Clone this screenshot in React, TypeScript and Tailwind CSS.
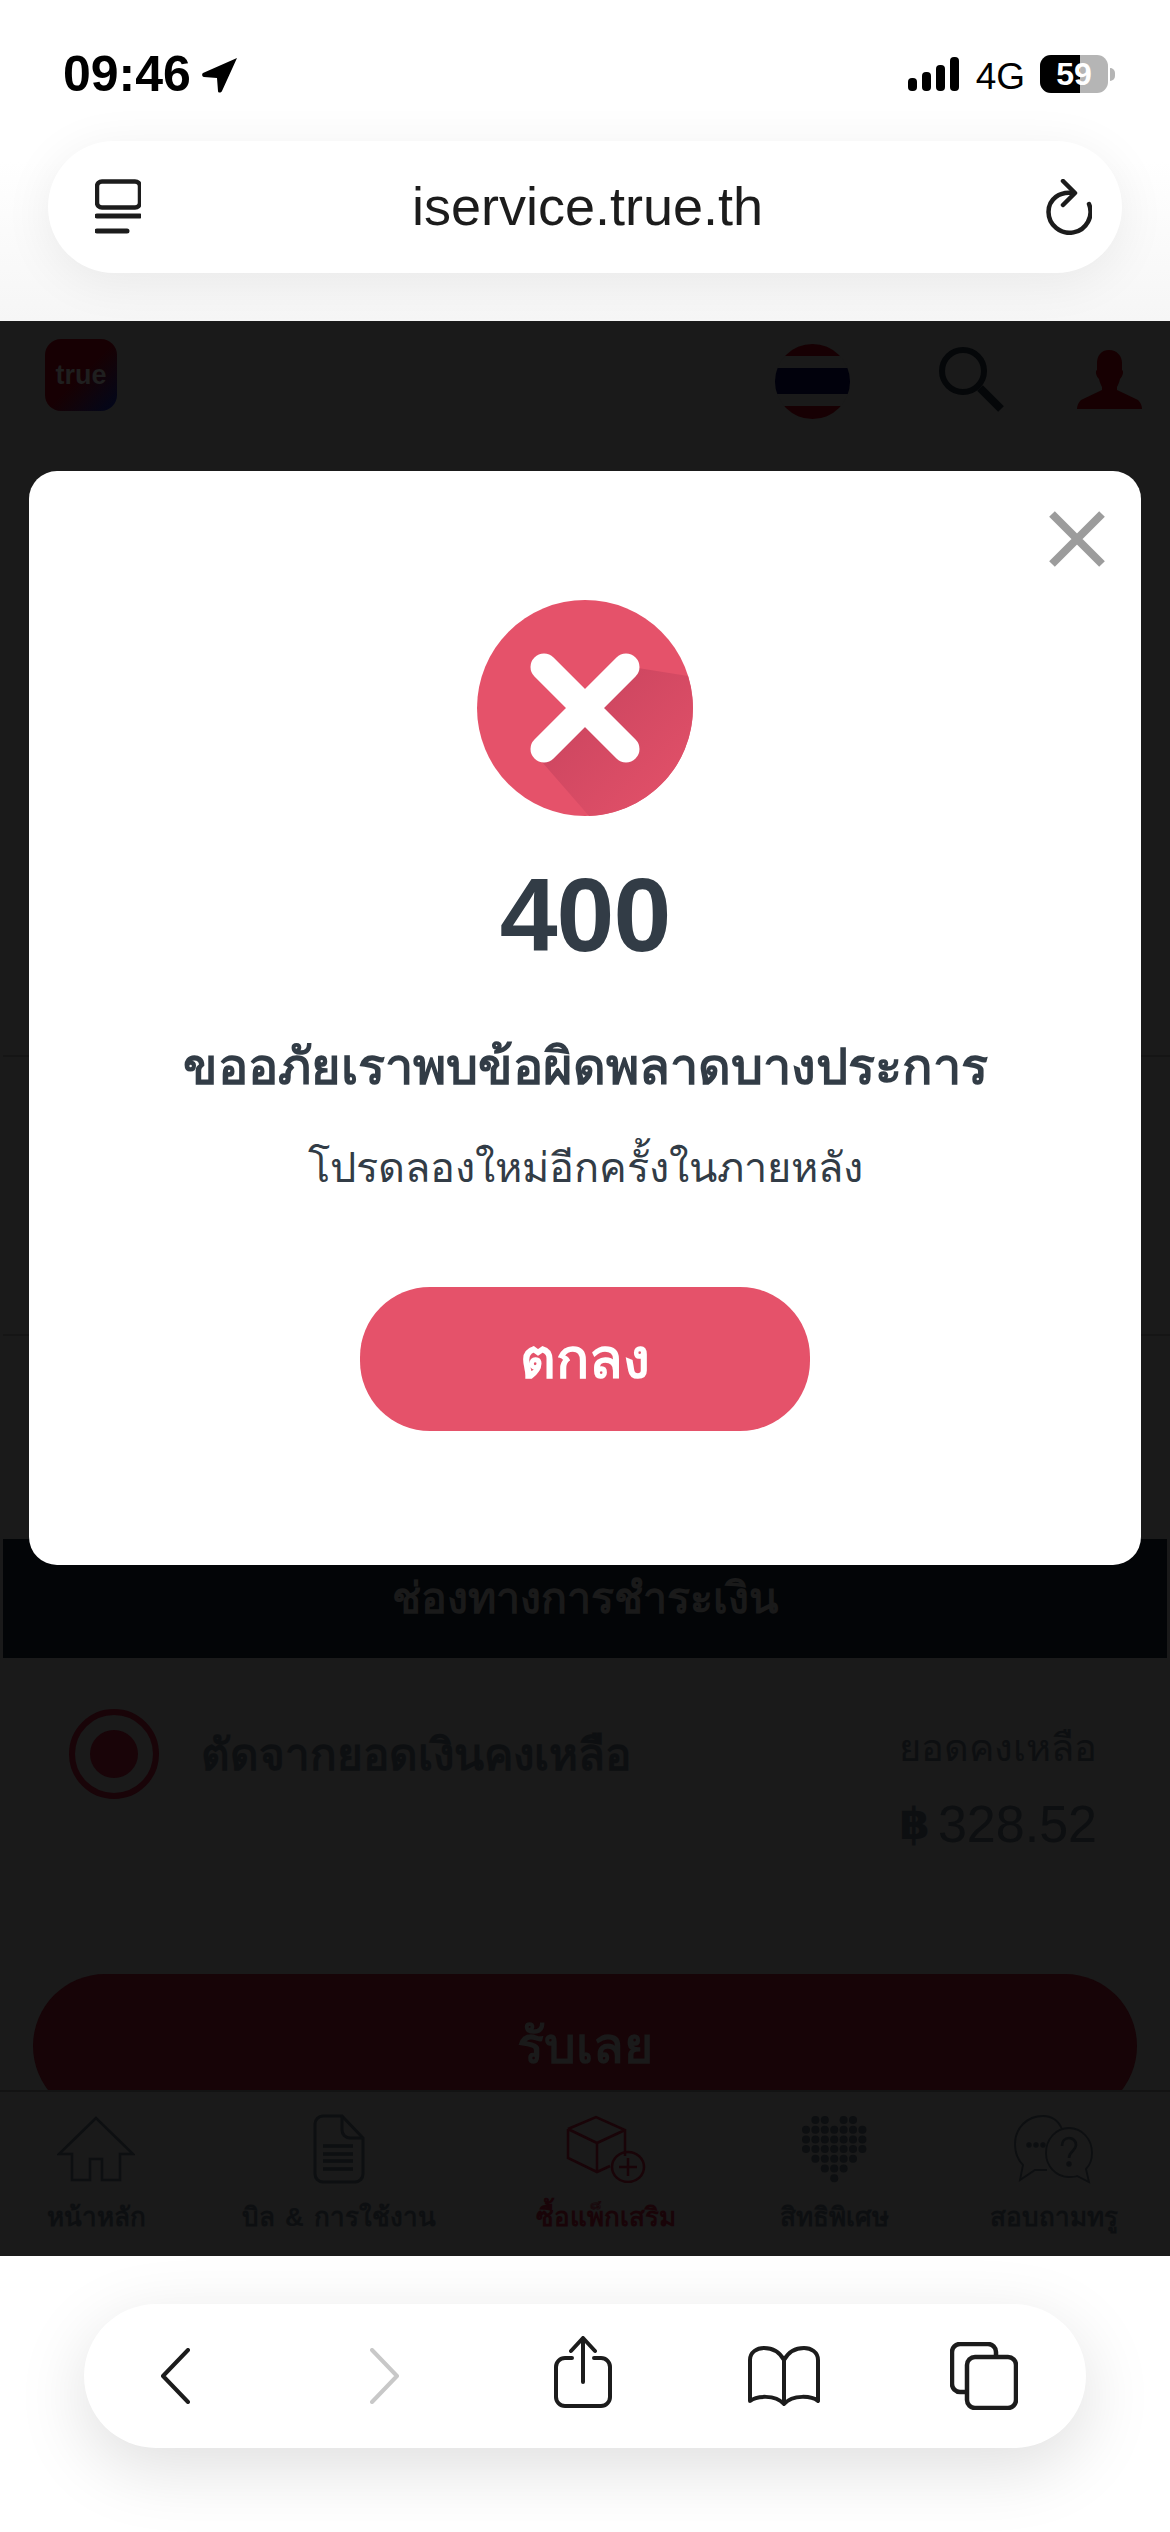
import * as React from 'react';

const sans = "font-['Liberation_Sans','Noto_Sans','DejaVu_Sans',sans-serif]";

const navItems = [
  { label: 'หน้าหลัก', active: false },
  { label: 'บิล & การใช้งาน', active: false },
  { label: 'ซื้อแพ็กเสริม', active: true },
  { label: 'สิทธิพิเศษ', active: false },
  { label: 'สอบถามทรู', active: false },
];

const HomeIcon = () => (
  <svg width="78" height="66" viewBox="0 0 78 66" fill="none" stroke="#0d0f11" strokeWidth="2.5">
    <path d="M39 2 2 38h13v26h18V43h12v21h18V38h13z" />
  </svg>
);

const DocIcon = () => (
  <svg width="52" height="70" viewBox="0 0 52 70" fill="none" stroke="#0d0f11" strokeWidth="3">
    <path d="M10 2h19l21 22v36a8 8 0 0 1-8 8H10a8 8 0 0 1-8-8V10a8 8 0 0 1 8-8z" />
    <path d="M29 2v14a8 8 0 0 0 8 8h13" />
    <path d="M10 32h30M10 40h30M10 47h30M10 55h30" strokeWidth="3.5" />
  </svg>
);

const BoxIcon = () => (
  <svg width="80" height="68" viewBox="0 0 80 68" fill="none" stroke="#190408" strokeWidth="2.5">
    <path d="M2 14 30 2l29 13v26M2 14v29l29 14 13-6M2 14l29 14 28-13M31 28v29" />
    <ellipse cx="62" cy="52" rx="16" ry="15" />
    <path d="M62 43v18M53 52h18" />
  </svg>
);

const HeartIcon = () => {
  const rows: number[][] = [
    [1, 2, 4, 5],
    [0, 1, 2, 3, 4, 5, 6],
    [0, 1, 2, 3, 4, 5, 6],
    [0, 1, 2, 3, 4, 5, 6],
    [1, 2, 3, 4, 5],
    [2, 3, 4],
    [3],
  ];
  return (
    <svg width="66" height="68" viewBox="0 0 66 68" fill="#0d0f11">
      {rows.map((row, r) =>
        row.map((c) => <circle key={`${r}-${c}`} cx={5 + c * 9.4} cy={5 + r * 9.7} r="4" />),
      )}
    </svg>
  );
};

const ChatIcon = () => (
  <svg width="80" height="70" viewBox="0 0 80 70" fill="none" stroke="#0d0f11" strokeWidth="1.8">
    <path d="M48 15C44 6 37 2 29 2 13 2 1 14 1 30c0 9 3 16 8 21l-3 15 15-10h12" />
    <path d="M56 18c-13 0-23 11-23 25 0 13 10 24 23 24 3 0 6 0 8-1l12 6-3-13c4-4 6-10 6-16 0-14-10-25-23-25z" transform="translate(-1 -4)" />
    <circle cx="15" cy="31" r="1.8" fill="#0d0f11" />
    <circle cx="22" cy="31" r="1.8" fill="#0d0f11" />
    <circle cx="29" cy="31" r="1.8" fill="#0d0f11" />
    <path d="M48 32c0-5 3-8 7-8s7 3 7 7c0 6-7 6-7 13" strokeWidth="2.6" />
    <circle cx="55" cy="50" r="1.8" fill="#0d0f11" />
  </svg>
);

const navIcons = [HomeIcon, DocIcon, BoxIcon, HeartIcon, ChatIcon];

export default function App() {
  return (
    <div className={`relative w-[1170px] h-[2532px] overflow-hidden flex flex-col bg-white ${sans}`}>
      {/* safari top */}
      <div className="h-[321px] shrink-0 bg-linear-to-b from-white via-white to-[#f6f6f6]">
        <div className="h-[141px] flex pt-[50px] pl-[63px] pr-[55px] items-start">
          <span className="text-[50px] leading-[48px] font-bold text-black">09:46</span>
          <svg className="ml-[11px] mt-[7px]" width="36" height="36" viewBox="0 0 36 36" fill="#000">
            <path d="M35 1 1 16C-.5 17 0 20 2 20l13 1 1 13c0 2 3 2 4 0z" />
          </svg>
          <div className="ml-auto flex items-start">
            <svg className="mt-[7px]" width="52" height="35" viewBox="0 0 52 35" fill="#000">
              <rect x="0" y="21" width="9" height="13" rx="4" />
              <rect x="14" y="15" width="9" height="19" rx="4" />
              <rect x="28" y="8" width="9" height="26" rx="4" />
              <rect x="42" y="0" width="9" height="34" rx="4" />
            </svg>
            <span className="ml-[16px] mt-[7px] text-[37px] leading-[40px] text-black">4G</span>
            <div className="relative ml-[15px] mt-[5px] w-[68px] h-[38px] rounded-[11px] bg-[#b5b5b5] overflow-hidden flex items-center justify-center">
              <div className="absolute left-0 top-0 h-full w-[40px] bg-black" />
              <span className="relative text-[32px] leading-none font-bold text-white">59</span>
            </div>
            <div className="mt-[18px] ml-[2px] w-[5px] h-[13px] rounded-r-full bg-[#b5b5b5]" />
          </div>
        </div>
        <div className="mx-[48px] h-[132px] rounded-[66px] bg-white shadow-[0_8px_50px_rgba(0,0,0,0.07)] flex items-center pl-[47px] pr-[30px]">
          <svg width="46" height="56" viewBox="0 0 46 56" fill="none" stroke="#1c1c1c" strokeWidth="4.500">
            <rect x="2" y="2.500" width="43" height="26" rx="5" />
            <path d="M2 37h43M2 52h30" strokeLinecap="round" strokeWidth="5" />
          </svg>
          <span className="flex-1 text-center text-[54px] leading-none text-[#1c1c1c] pb-[2px] pr-[12px]">iservice.true.th</span>
          <svg width="46" height="56" viewBox="0 0 46 56" fill="none" stroke="#1c1c1c" strokeWidth="4.500" strokeLinecap="round" strokeLinejoin="round">
            <path d="M27 14C14 12 2.500 20 2.500 33a21 21 0 1 0 40.500-8" />
            <path d="M17 2l12 12-12 12" />
          </svg>
        </div>
      </div>

      {/* dimmed page */}
      <div className="h-[1935px] shrink-0 flex flex-col bg-[#1a1a1a] text-[#0d0f11]">
        <div className="h-[736px] shrink-0 border-b-2 border-[#151515] ml-[3px]">
          <div className="flex items-start pt-[18px] pl-[42px]">
            <div className="w-[72px] h-[72px] rounded-[16px] bg-linear-to-br from-[#170003] via-[#170003] to-[#01061c] flex items-center justify-center">
              <span className="text-[27px] font-bold leading-none text-[#1f1f1f]">true</span>
            </div>
            <div className="ml-[658px] mt-[5px] w-[75px] h-[75px] rounded-full overflow-hidden flex flex-col">
              <div className="h-[12px] bg-[#170003]" />
              <div className="h-[12px] bg-[#1a1a1a]" />
              <div className="h-[26px] bg-[#01010c]" />
              <div className="h-[12px] bg-[#1a1a1a]" />
              <div className="h-[13px] bg-[#170003]" />
            </div>
            <svg className="ml-[89px] mt-[8px]" width="65" height="65" viewBox="0 0 65 65" fill="none" stroke="#050709">
              <circle cx="24" cy="24" r="21" strokeWidth="6" />
              <path d="M41 41l21 21" strokeWidth="8" />
            </svg>
            <svg className="ml-[73px] mt-[11px]" width="65" height="59" viewBox="0 0 65 59" fill="#170002">
              <path d="M32 0c-8 0-12 6-12 13v7c-2 1-1 6 2 9 1 4 2 6 3 8v3L4 50c-2 2-4 5-4 9h65c0-4-2-7-4-9L40 40v-3c1-2 2-4 3-8 3-3 4-8 2-9v-7C45 6 40 0 32 0z" />
            </svg>
          </div>
        </div>
        <div className="h-[279px] shrink-0 border-b-2 border-[#151515] ml-[3px]" />
        <div className="h-[203px] shrink-0" />
        <div className="h-[119px] shrink-0 mx-[3px] bg-[#030507] flex items-center justify-center">
          <span className="text-[43px] font-bold leading-none text-[#1a1a1a]">ช่องทางการชำระเงิน</span>
        </div>
        <div className="h-[316px] shrink-0 flex items-start pl-[69px] pr-[73px] pt-[51px]">
          <div className="w-[90px] h-[90px] rounded-full border-[6px] border-[#190408] flex items-center justify-center">
            <div className="w-[48px] h-[48px] rounded-full bg-[#190408]" />
          </div>
          <span className="ml-[42px] mt-[24px] text-[44px] font-bold leading-none">ตัดจากยอดเงินคงเหลือ</span>
          <div className="ml-auto flex flex-col items-end">
            <span className="mt-[20px] text-[38px] leading-none">ยอดคงเหลือ</span>
            <div className="mt-[31px] flex items-center gap-[8px] text-[52px] leading-none">
              <span className="text-[44px] font-bold">฿</span>
              <span>328.52</span>
            </div>
          </div>
        </div>
        <div className="h-[116px] shrink-0 overflow-hidden px-[33px]">
          <div className="h-[144px] rounded-[72px] bg-[#170407] flex items-center justify-center">
            <span className="text-[50px] font-bold leading-none text-[#1a1a1a]">รับเลย</span>
          </div>
        </div>
        <div className="flex-1 border-t-2 border-[#131313]">
          <div className="grid h-full grid-cols-[192px_294px_240px_216px_224px]">
            {navItems.map((item, i) => {
              const Icon = navIcons[i];
              return (
                <div key={item.label} className="flex flex-col items-center pt-[22px]">
                  <div className="h-[70px] flex items-center">
                    <Icon />
                  </div>
                  <span className={`mt-[20px] text-[26px] font-bold leading-none whitespace-nowrap [word-spacing:3px] ${item.active ? 'text-[#190408]' : 'text-[#0d0f11]'}`}>
                    {item.label}
                  </span>
                </div>
              );
            })}
          </div>
        </div>
      </div>

      {/* safari bottom */}
      <div className="flex-1 pt-[48px] px-[84px] bg-white">
        <div className="h-[144px] rounded-[72px] bg-white shadow-[0_20px_70px_rgba(0,0,0,0.13)] flex items-center pl-[76px]">
          <svg width="30" height="56" viewBox="0 0 30 56" fill="none" stroke="#1c1c1c" strokeWidth="4" strokeLinecap="round" strokeLinejoin="round">
            <path d="M28 2 3 28l25 26" />
          </svg>
          <svg className="ml-[180px]" width="30" height="56" viewBox="0 0 30 56" fill="none" stroke="#c8c8c8" strokeWidth="4" strokeLinecap="round" strokeLinejoin="round">
            <path d="m2 2 25 26L2 54" />
          </svg>
          <svg className="ml-[154px] mt-[-8px]" width="58" height="72" viewBox="0 0 58 72" fill="none" stroke="#1c1c1c" strokeWidth="4" strokeLinecap="round" strokeLinejoin="round">
            <path d="M18 22h-7a9 9 0 0 0-9 9v30a9 9 0 0 0 9 9h36a9 9 0 0 0 9-9V31a9 9 0 0 0-9-9h-7" />
            <path d="M29 46V3M17 15 29 2l12 13" />
          </svg>
          <svg className="ml-[136px]" width="72" height="60" viewBox="0 0 72 60" fill="none" stroke="#1c1c1c" strokeWidth="4" strokeLinejoin="round">
            <path d="M36 14C31 5 23 2 16 2 9 2 2 6 2 14v41c6-5 25-7 34 3 9-10 28-8 34-3V14c0-8-7-12-14-12-7 0-15 3-20 12zM36 14v44" />
          </svg>
          <svg className="ml-[130px]" width="68" height="68" viewBox="0 0 68 68" fill="none" stroke="#1c1c1c" strokeWidth="4.500">
            <path d="M15 50H10a8 8 0 0 1-8-8V10a8 8 0 0 1 8-8h28a8 8 0 0 1 8 8v5" />
            <rect x="17" y="15" width="49" height="51" rx="8" />
          </svg>
        </div>
      </div>

      {/* error modal, sits over the page */}
      <div className="absolute left-[29px] top-[471px] w-[1112px] h-[1094px] rounded-[28px] bg-white flex flex-col items-center">
        <svg className="absolute right-[36px] top-[40px]" width="56" height="56" viewBox="0 0 56 56" stroke="#9c9c9c" strokeWidth="8">
          <path d="M3 3l50 50M53 3 3 53" />
        </svg>
        <svg className="mt-[129px]" width="216" height="216" viewBox="0 0 216 216">
          <defs>
            <linearGradient id="errShadow" x1="0.3" y1="0.3" x2="1" y2="1">
              <stop offset="0" stopColor="#cf4761" />
              <stop offset="1" stopColor="#e5526a" />
            </linearGradient>
          </defs>
          <circle cx="108" cy="108" r="108" fill="#e5526a" />
          <path d="M161 68 L211 76 A108 108 0 0 1 112 216 L65 162z" fill="url(#errShadow)" />
          <path d="M67 67l82 82M149 67l-82 82" stroke="#fff" strokeWidth="27" strokeLinecap="round" />
        </svg>
        <span className="mt-[39px] text-[104px] leading-[120px] font-bold text-[#323c46] tracking-[-1px]">400</span>
        <span className="mt-[57px] text-[50.500px] leading-[70px] font-bold text-[#323c46]">ขออภัยเราพบข้อผิดพลาดบางประการ</span>
        <span className="mt-[36px] text-[41.500px] leading-[60px] text-[#323c46]">โปรดลองใหม่อีกครั้งในภายหลัง</span>
        <div className="mt-[89px] w-[450px] h-[144px] rounded-[70px] bg-[#e5526a] flex items-center justify-center">
          <span className="text-[55px] font-bold leading-none text-white">ตกลง</span>
        </div>
      </div>
    </div>
  );
}
